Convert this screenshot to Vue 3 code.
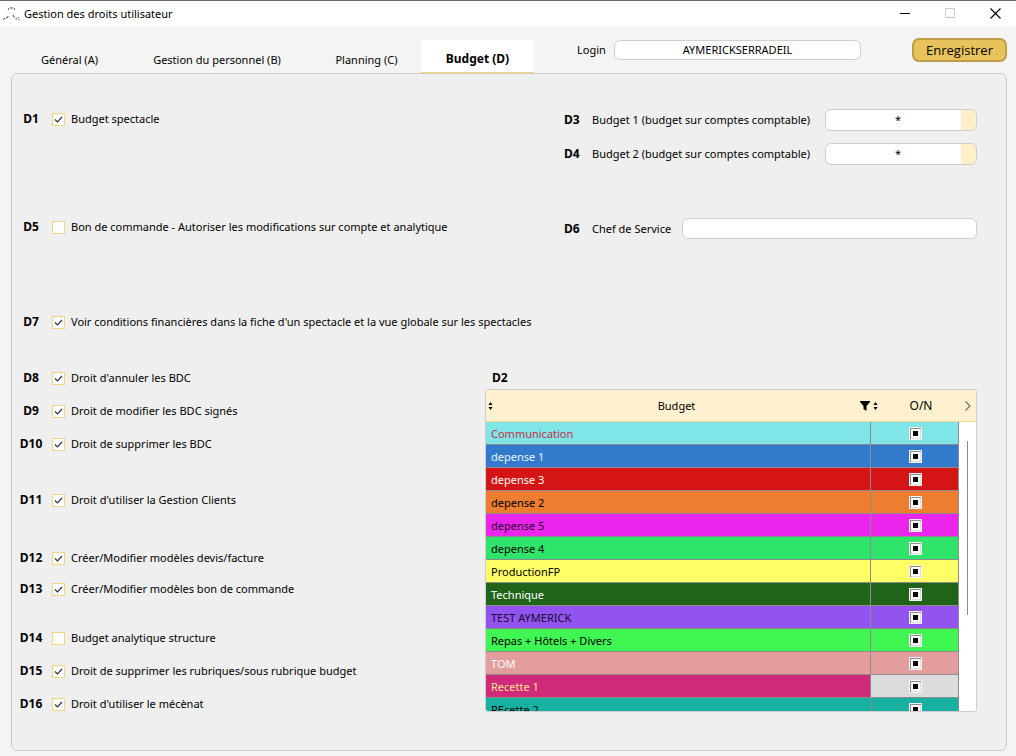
<script setup>
import { ref } from 'vue'

const tabs = ['Général (A)', 'Gestion du personnel (B)', 'Planning (C)', 'Budget (D)']
const activeTab = ref('Budget (D)')
const login = ref('AYMERICKSERRADEIL')
const chef = ref('')

const topRights = ref([
  { code: 'D1', label: 'Budget spectacle', on: true },
  { code: 'D5', label: 'Bon de commande - Autoriser les modifications sur compte et analytique', on: false },
])
const viewRight = ref({
  code: 'D7',
  label: "Voir conditions financières dans la fiche d'un spectacle et la vue globale sur les spectacles",
  on: true,
})
const groups = ref([
  [
    { code: 'D8', label: "Droit d'annuler les BDC", on: true },
    { code: 'D9', label: 'Droit de modifier les BDC signés', on: true },
    { code: 'D10', label: 'Droit de supprimer les BDC', on: true },
  ],
  [{ code: 'D11', label: "Droit d'utiliser la Gestion Clients", on: true }],
  [
    { code: 'D12', label: 'Créer/Modifier modèles devis/facture', on: true },
    { code: 'D13', label: 'Créer/Modifier modèles bon de commande', on: true },
  ],
  [
    { code: 'D14', label: 'Budget analytique structure', on: false },
    { code: 'D15', label: 'Droit de supprimer les rubriques/sous rubrique budget', on: true },
    { code: 'D16', label: "Droit d'utiliser le mécènat", on: true },
  ],
])
const accounts = [
  { code: 'D3', id: 'budget-1', label: 'Budget 1 (budget sur comptes comptable)' },
  { code: 'D4', id: 'budget-2', label: 'Budget 2 (budget sur comptes comptable)' },
]
const budgets = [
  { name: 'Communication', bg: '#80e5e6', fg: '#c0304a' },
  { name: 'depense 1', bg: '#337acc', fg: '#e8f4ff' },
  { name: 'depense 3', bg: '#d51515', fg: '#ffffff' },
  { name: 'depense 2', bg: '#ec7d31', fg: '#000000' },
  { name: 'depense 5', bg: '#ec25ec', fg: '#26062a' },
  { name: 'depense 4', bg: '#2fe36b', fg: '#000000' },
  { name: 'ProductionFP', bg: '#ffff66', fg: '#000000' },
  { name: 'Technique', bg: '#1f6418', fg: '#ffffff' },
  { name: 'TEST AYMERICK', bg: '#9254ee', fg: '#150830' },
  { name: 'Repas + Hôtels + Divers', bg: '#40f652', fg: '#000000' },
  { name: 'TOM', bg: '#e39d9c', fg: '#ffffff' },
  { name: 'Recette 1', bg: '#cf2b7a', fg: '#ffe08a', cell: '#dcdcdc' },
  { name: 'REcette 2', bg: '#18b0a1', fg: '#000000' },
]
</script>

<template>
  <div class="window">
    <header class="titlebar">
      <svg class="app-icon" width="18" height="16" viewBox="0 0 18 16" fill="none" stroke="#555" stroke-width="1.100">
        <path d="M6 3.500 7 2.500M8 2h3M12 2.500l1 1M1 13.500l2-1M4 12l2.500-1.500M11 9l1.500 2.500M14 12l.5 1.500M16 11l.5 1M17 13v1" />
      </svg>
      <h1>Gestion des droits utilisateur</h1>
      <div class="controls">
        <button type="button" aria-label="Réduire">
          <svg width="11" height="11" viewBox="0 0 11 11"><path d="M0 5.500h10" stroke="#000" /></svg>
        </button>
        <button type="button" aria-label="Agrandir" disabled>
          <svg width="11" height="11" viewBox="0 0 11 11"><path d="M.5.5h9v9h-9z" fill="none" stroke="#ccc" /></svg>
        </button>
        <button type="button" aria-label="Fermer">
          <svg width="11" height="11" viewBox="0 0 11 11"><path d="M.5.5l10 10M10.500.5l-10 10" stroke="#000" stroke-width="1.200" /></svg>
        </button>
      </div>
    </header>

    <div class="toolbar">
      <nav class="tabs">
        <button
          v-for="tab in tabs"
          :key="tab"
          type="button"
          class="tab"
          :class="{ active: tab === activeTab }"
          @click="activeTab = tab"
        >{{ tab }}</button>
      </nav>
      <div class="login">
        <label for="login">Login</label>
        <input id="login" v-model="login" class="field" type="text" />
      </div>
      <button type="button" class="save">Enregistrer</button>
    </div>

    <main class="panel">
      <section class="upper">
        <div class="top-rights">
          <div v-for="r in topRights" :key="r.code" class="right">
            <b>{{ r.code }}</b>
            <input :id="r.code" v-model="r.on" class="check" type="checkbox" />
            <label :for="r.code">{{ r.label }}</label>
          </div>
        </div>
        <div class="accounts">
          <div v-for="a in accounts" :key="a.code" class="account">
            <b>{{ a.code }}</b>
            <label :for="a.id">{{ a.label }}</label>
            <select :id="a.id" class="field combo"><option>*</option></select>
          </div>
          <div class="account chef">
            <b>D6</b>
            <label for="chef">Chef de Service</label>
            <input id="chef" v-model="chef" class="field" type="text" />
          </div>
        </div>
      </section>

      <div class="right view-right">
        <b>{{ viewRight.code }}</b>
        <input :id="viewRight.code" v-model="viewRight.on" class="check" type="checkbox" />
        <label :for="viewRight.code">{{ viewRight.label }}</label>
      </div>

      <section class="lower">
        <div class="groups">
          <div v-for="(group, i) in groups" :key="i" class="group">
            <div v-for="r in group" :key="r.code" class="right">
              <b>{{ r.code }}</b>
              <input :id="r.code" v-model="r.on" class="check" type="checkbox" />
              <label :for="r.code">{{ r.label }}</label>
            </div>
          </div>
        </div>

        <div class="budgets">
          <b class="budgets-code">D2</b>
          <div class="grid">
            <table>
              <colgroup><col /><col class="col-on" /><col class="col-scroll" /></colgroup>
              <thead>
                <tr>
                  <th scope="col">
                    <div class="head">
                      <svg width="5" height="8" viewBox="0 0 5 8"><path d="M2.500 0 4.500 3h-4zM2.500 8 .5 5h4z" /></svg>
                      <span>Budget</span>
                      <svg width="10" height="10" viewBox="0 0 10 10"><path d="M0 0h10v1L6.500 5v5l-3-2V5L0 1z" /></svg>
                      <svg width="5" height="8" viewBox="0 0 5 8"><path d="M2.500 0 4.500 3h-4zM2.500 8 .5 5h4z" /></svg>
                    </div>
                  </th>
                  <th scope="col" class="head-on">O/N</th>
                  <th scope="col">
                    <button type="button" class="more" aria-label="Colonnes suivantes">
                      <svg width="6" height="10" viewBox="0 0 6 10" fill="none" stroke="#776f5c" stroke-width="1.200"><path d="M.5.5 5 5 .5 9.500" /></svg>
                    </button>
                  </th>
                </tr>
              </thead>
              <tbody>
                <tr v-for="b in budgets" :key="b.name">
                  <td class="name" :style="{ background: b.bg, color: b.fg }">{{ b.name }}</td>
                  <td class="on" :style="{ background: b.cell || b.bg }">
                    <input class="tri" type="checkbox" :indeterminate="true" :aria-label="b.name" />
                  </td>
                  <td class="gutter"></td>
                </tr>
              </tbody>
            </table>
            <div class="thumb"></div>
          </div>
        </div>
      </section>
    </main>
  </div>
</template>

<style>
body {
  margin: 0;
  background: #f4f4f4;
}
</style>

<style scoped>
* {
  box-sizing: border-box;
}
.window {
  display: flex;
  flex-direction: column;
  min-height: 100vh;
  padding-bottom: 5px;
  background: #f4f4f4;
  color: #000;
  font-family: "Noto Sans", "Open Sans", sans-serif;
  font-size: 11px;
  line-height: 20px;
}
button,
input,
select {
  margin: 0;
  font: inherit;
  color: inherit;
}
button {
  padding: 0;
  border: 0;
  background: none;
}
b {
  flex: none;
  font-size: 12px;
}
label {
  white-space: nowrap;
}
svg {
  display: block;
  flex: none;
}
.titlebar {
  display: flex;
  align-items: center;
  height: 26px;
  padding-left: 2px;
  gap: 4px;
  border-top: 1px solid #6b696b;
  background: #fff;
}
h1 {
  flex: 1;
  margin: 0;
  font-size: 11px;
  font-weight: 400;
}
.controls {
  display: flex;
  gap: 3px;
}
.controls button {
  display: flex;
  align-items: center;
  justify-content: center;
  width: 42px;
  height: 24px;
}
.toolbar {
  display: flex;
  align-items: flex-start;
  height: 48px;
  padding: 12px 9px 0 17px;
}
.tabs {
  display: grid;
  grid-template-columns: 105px 190px 109px 113px;
  margin-top: 2px;
}
.tab {
  height: 34px;
  padding-top: 6px;
  white-space: nowrap;
}
.tab.active {
  border-bottom: 2px solid #f3d371;
  background: #fff;
  font-size: 12px;
  font-weight: 700;
}
.login {
  display: flex;
  flex: 1;
  margin: 2px 51px 0 43px;
}
.login label {
  width: 37px;
}
.field {
  flex: 1;
  min-width: 0;
  height: 21px;
  padding: 0 6px;
  border: 1px solid #cfcfcf;
  border-radius: 6px;
  outline: 0;
  background: #fff;
}
.login .field {
  height: 20px;
  text-align: center;
}
.save {
  width: 95px;
  height: 24px;
  border: 2px solid #bf9d45;
  border-radius: 7px;
  background: #e8c35b;
  font-family: "Open Sans", "Noto Sans", sans-serif;
  font-size: 13px;
  font-weight: 500;
}
.panel {
  flex: 1;
  margin: -1px 9px 0 11px;
  padding: 35px 29px 0 7px;
  border: 1px solid #cdcdcd;
  border-radius: 6px;
  background: #efefef;
}
.upper {
  display: grid;
  grid-template-columns: 1fr 413px;
}
.top-rights {
  display: flex;
  flex-direction: column;
  gap: 88px;
}
.right {
  display: flex;
  align-items: center;
  height: 20px;
}
.right b {
  width: 24px;
  margin-right: 9px;
  text-align: center;
}
.check {
  flex: none;
  width: 13px;
  height: 13px;
  margin-right: 6px;
  appearance: none;
  border: 1px solid #f3d581;
  background: #fff;
}
.check:checked {
  background: #fff url("data:image/svg+xml,%3Csvg xmlns='http://www.w3.org/2000/svg' viewBox='0 0 11 11'%3E%3Cpath d='M2 5.500l2.500 2.500L9 3' fill='none' stroke='%23333' stroke-width='1.200'/%3E%3C/svg%3E") center / 11px 11px no-repeat;
}
.accounts {
  display: flex;
  flex-direction: column;
  gap: 12px;
}
.account {
  display: flex;
  align-items: center;
}
.account b {
  width: 28px;
}
.combo {
  flex: 0 0 152px;
  height: 22px;
  margin-left: auto;
  padding: 0 22px 0 16px;
  appearance: none;
  background: linear-gradient(to left, #fff0c8 15px, #fff 15px);
  text-align: center;
  text-align-last: center;
}
.chef {
  margin-top: 41px;
}
.chef label {
  width: 90px;
}
.view-right {
  margin-top: 73px;
}
.lower {
  display: grid;
  grid-template-columns: 1fr 492px;
  margin-top: 36px;
}
.group {
  display: flex;
  flex-direction: column;
  gap: 13px;
}
.group + .group {
  margin-top: 36px;
}
.group:nth-child(3) {
  gap: 11px;
  margin-top: 38px;
}
.group:last-child {
  margin-top: 29px;
}
.budgets-code {
  display: block;
  padding-left: 7px;
}
.grid {
  position: relative;
  height: 323px;
  margin-top: 1px;
  overflow: hidden;
  border: 1px solid #cdcdcd;
  border-radius: 3px;
  background: #fff;
}
table {
  width: 100%;
  table-layout: fixed;
  border-collapse: separate;
  border-spacing: 0;
}
.col-on {
  width: 88px;
}
.col-scroll {
  width: 17px;
}
th {
  height: 32px;
  padding: 0;
  border-bottom: 1px solid #f3d98c;
  background: #fff1cf;
  font-weight: 400;
}
.head {
  display: flex;
  align-items: center;
  gap: 3px;
  margin-right: -7px;
  padding-left: 2px;
}
.head span {
  flex: 1;
}
.head-on {
  padding-left: 12px;
  font-size: 12px;
}
.more {
  display: flex;
  align-items: center;
  justify-content: center;
  width: 100%;
  height: 20px;
}
td {
  height: 23px;
  padding: 0;
  border-right: 1px solid #8c8c8c;
  border-bottom: 1px solid #8c8c8c;
}
.name {
  padding: 1px 0 0 5px;
}
.on {
  padding-left: 2px;
}
.gutter {
  border: 0;
}
.tri {
  display: block;
  width: 13px;
  height: 13px;
  margin: 0 auto;
  appearance: none;
  border: 1px solid #f4f4f4;
  background: linear-gradient(#000, #000) center / 5px 5px no-repeat, #fff;
  box-shadow: inset 1px 1px 0 #8c8c8c, inset -1px -1px 0 #dedede;
}
.thumb {
  position: absolute;
  top: 51px;
  right: 8px;
  width: 1px;
  height: 174px;
  background: #8c8c8c;
}
</style>
